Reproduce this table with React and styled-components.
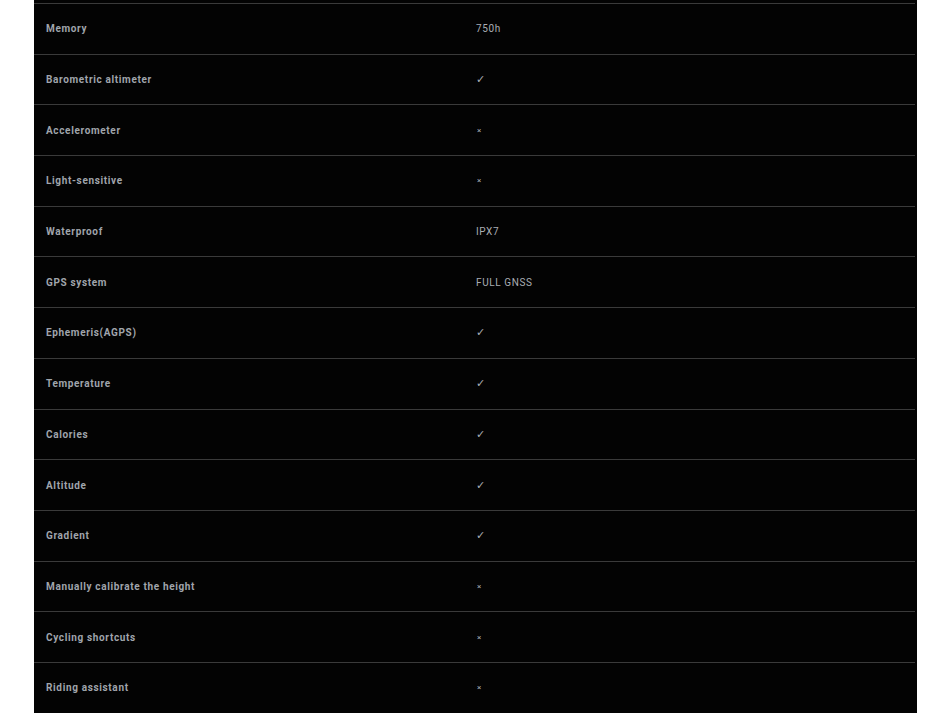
import React from "react";
import styled, { createGlobalStyle } from "styled-components";

const Global = createGlobalStyle`
  html, body { margin: 0; padding: 0; background: #ffffff; }
  body { font-family: Roboto, "Liberation Sans", Arial, sans-serif; }
`;

const Page = styled.div`
  padding: 0 33px 0 34px;
  height: 713px;
  overflow: hidden;
`;

const Table = styled.div`
  background: #030303;
  padding-top: 3px;
  display: flex;
  flex-direction: column;
`;

const Row = styled.div`
  display: grid;
  grid-template-columns: 430px 1fr;
  height: 50.7px;
  box-sizing: border-box;
  border-top: 1px solid #3a3a3a;
  margin-right: 2px;
  align-items: center;
`;

const Label = styled.div`
  padding-left: 12px;
  font-size: 10px;
  font-weight: 700;
  letter-spacing: 0.65px;
  color: #a0a5ac;
`;

const Value = styled.div`
  padding-left: ${(p) => (p.$kind === "cross" ? "13px" : "12px")};
  font-size: ${(p) => (p.$kind === "cross" ? "8px" : p.$kind === "check" ? "11px" : "10px")};
  font-weight: 400;
  letter-spacing: 0.6px;
  color: #a9adb3;
`;

const rows = [
  ["Memory", "750h"],
  ["Barometric altimeter", "✓"],
  ["Accelerometer", "×"],
  ["Light-sensitive", "×"],
  ["Waterproof", "IPX7"],
  ["GPS system", "FULL GNSS"],
  ["Ephemeris(AGPS)", "✓"],
  ["Temperature", "✓"],
  ["Calories", "✓"],
  ["Altitude", "✓"],
  ["Gradient", "✓"],
  ["Manually calibrate the height", "×"],
  ["Cycling shortcuts", "×"],
  ["Riding assistant", "×"],
];

const kindOf = (v) => (v === "×" ? "cross" : v === "✓" ? "check" : "text");

export default function App() {
  return (
    <>
      <Global />
      <Page>
        <Table>
          {rows.map(([k, v]) => (
            <Row key={k}>
              <Label>{k}</Label>
              <Value $kind={kindOf(v)}>{v}</Value>
            </Row>
          ))}
        </Table>
      </Page>
    </>
  );
}
